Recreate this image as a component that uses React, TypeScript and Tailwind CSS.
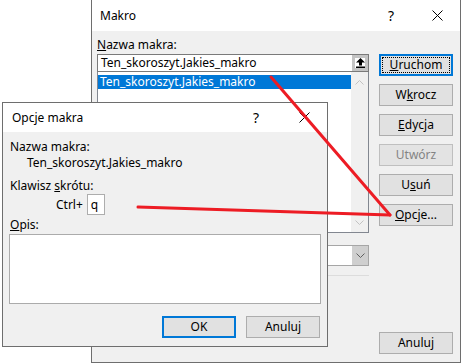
import React from "react";

const font = "font-['Segoe_UI','Noto_Sans',sans-serif] text-[12px]";

function CloseIcon() {
  return (
    <svg width="11" height="11" viewBox="0 0 11 11">
      <path d="M0.5 0.5 L10.5 10.5 M10.5 0.5 L0.5 10.5" stroke="#000" strokeWidth="1" />
    </svg>
  );
}

function Chevron({ up, color }: { up?: boolean; color: string }) {
  return (
    <svg width="9" height="5" viewBox="0 0 9 5">
      <path d={up ? "M0.5 4.5 L4.5 0.5 L8.5 4.5" : "M0.5 0.5 L4.5 4.5 L8.5 0.5"} stroke={color} strokeWidth="1" fill="none" />
    </svg>
  );
}

function TitleBar({ title, h, pad, helpGap }: { title: string; h: string; pad: string; helpGap: string }) {
  return (
    <div className={`flex items-center bg-white ${h} ${pad}`}>
      <span className="flex-1 text-black">{title}</span>
      <span className={`text-[14px] leading-none text-black ${helpGap}`}>?</span>
      <span className="mr-[17px] flex w-[11px] items-center">
        <CloseIcon />
      </span>
    </div>
  );
}

function Btn({
  children,
  def,
  focus,
  disabled,
}: {
  children: React.ReactNode;
  def?: boolean;
  focus?: boolean;
  disabled?: boolean;
}) {
  return (
    <div
      className={`flex h-[22px] w-[74px] items-center justify-center ${
        def ? "border-2 border-[#0078d7]" : disabled ? "border border-[#bfbfbf]" : "border border-[#adadad]"
      } ${disabled ? "bg-[#e3e3e3] text-[#838383]" : "bg-[#e1e1e1] text-black"}`}
    >
      {focus ? (
        <div className="flex h-[16px] w-[68px] items-center justify-center border border-dotted border-black">{children}</div>
      ) : (
        children
      )}
    </div>
  );
}

function MakroWindow() {
  return (
    <div className="absolute left-[91px] top-0 flex h-[363px] w-[370px] flex-col border-x border-b border-[#6e6e6e] bg-[#f0f0f0]">
      <TitleBar title="Makro" h="h-[31px]" pad="pl-[8px]" helpGap="mr-[38px]" />
      <div className="flex flex-1 pl-[5px]">
        {/* left column */}
        <div className="flex w-[272px] flex-col pt-[6px]">
          <div className="h-[16px] leading-[16px]">
            <span className="underline">N</span>azwa makra:
          </div>
          <div className="mt-[1px] flex h-[18px] border border-[#7a7a7a] bg-white">
            <div className="flex-1 pl-[3px] leading-[16px]">Ten_skoroszyt.Jakies_makro</div>
            <div className="flex w-[16px] items-center justify-center border-[3px] border-[#c4c4c4] bg-white">
              <svg width="9" height="10" viewBox="0 0 9 10">
                <path d="M4.5 0 L9 4.5 L6 4.5 L6 7.5 L3 7.5 L3 4.5 L0 4.5 Z" fill="#000" />
                <rect x="0" y="8.5" width="9" height="1.5" fill="#000" />
              </svg>
            </div>
          </div>
          <div className="flex h-[161px] border border-t-0 border-[#828790] bg-white">
            <div className="flex-1 pt-[3px]">
              <div className="h-[14px] bg-[#0078d7] pl-[2px] leading-[14px] text-white">Ten_skoroszyt.Jakies_makro</div>
            </div>
            <div className="flex w-[17px] flex-col items-center justify-between bg-[#f0f0f0] pb-[7px] pt-[8px]">
              <Chevron up color="#c2c2c2" />
              <Chevron color="#c2c2c2" />
            </div>
          </div>
          <div className="mt-[12px] flex items-center justify-between">
            <span>Makra w:</span>
            <div className="flex h-[21px] w-[200px] border border-[#a6a6a6] bg-white">
              <div className="flex-1" />
              <div className="flex w-[16px] items-center justify-center bg-[#cfcfcf]">
                <Chevron color="#606060" />
              </div>
            </div>
          </div>
          <div className="mt-[9px] h-px bg-[#dcdcdc]" />
        </div>
        {/* right column */}
        <div className="ml-[10px] flex flex-col gap-[8px] pb-[8px] pt-[23px]">
          <Btn def focus>
            <span>
              <span className="underline">U</span>ruchom
            </span>
          </Btn>
          <Btn>
            <span>
              W<span className="underline">k</span>rocz
            </span>
          </Btn>
          <Btn>
            <span>
              <span className="underline">E</span>dycja
            </span>
          </Btn>
          <Btn disabled>Utwórz</Btn>
          <Btn>
            <span>
              U<span className="underline">s</span>uń
            </span>
          </Btn>
          <Btn>
            <span>
              <span className="underline">O</span>pcje...
            </span>
          </Btn>
          <div className="mt-auto">
            <Btn>Anuluj</Btn>
          </div>
        </div>
      </div>
    </div>
  );
}

function OpcjeWindow() {
  return (
    <div className="absolute left-[2px] top-[102px] flex h-[245px] w-[326px] flex-col border border-[#6e6e6e] bg-[#f0f0f0]">
      <TitleBar title="Opcje makra" h="h-[29px]" pad="pl-[9px]" helpGap="mr-[40px]" />
      <div className="flex flex-1 flex-col pl-[6px] pr-[5px] pt-[7px]">
        <div className="ml-[1px] h-[16px] leading-[16px]">Nazwa makra:</div>
        <div className="ml-[18px] h-[16px] leading-[16px]">Ten_skoroszyt.Jakies_makro</div>
        <div className="ml-[1px] mt-[7px] h-[16px] leading-[16px]">
          Klawisz <span className="underline">s</span>krótu:
        </div>
        <div className="ml-[47px] flex h-[21px] items-center">
          <span>Ctrl+</span>
          <div className="ml-[4px] flex h-[21px] w-[18px] items-center border border-[#adadad] bg-white pl-[3px]">q</div>
        </div>
        <div className="ml-[1px] mt-[2px] h-[16px] leading-[16px]">
          <span className="underline">O</span>pis:
        </div>
        <div className="mt-[1px] h-[70px] w-[312px] border border-[#ababab] bg-white" />
        <div className="mt-[12px] flex justify-end gap-[10px] pr-[2px]">
          <Btn def>OK</Btn>
          <Btn>Anuluj</Btn>
        </div>
      </div>
    </div>
  );
}

export default function App() {
  return (
    <div className={`relative h-[363px] w-[461px] overflow-hidden bg-white ${font}`}>
      <MakroWindow />
      <OpcjeWindow />
      <svg className="pointer-events-none absolute inset-0" width="461" height="363">
        <path d="M271 77 L390 215" stroke="#ed1c24" strokeWidth="3" strokeLinecap="round" />
        <path d="M138 207 L390 215" stroke="#ed1c24" strokeWidth="3" strokeLinecap="round" />
      </svg>
    </div>
  );
}
